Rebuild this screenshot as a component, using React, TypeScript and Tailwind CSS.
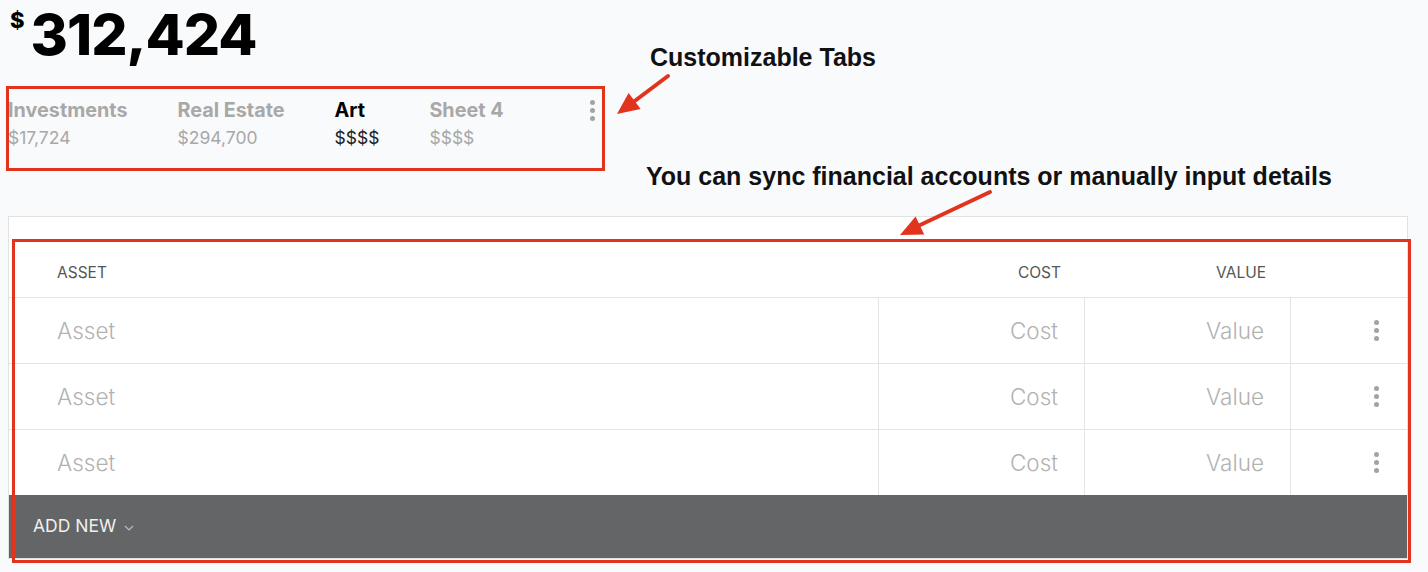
import React from "react";

const Kebab = ({ className = "" }: { className?: string }) => (
  <div className={`flex flex-col items-center gap-[3px] ${className}`}>
    <span className="block w-[5px] h-[5px] rounded-full bg-[#a3a3a3]" />
    <span className="block w-[5px] h-[5px] rounded-full bg-[#a3a3a3]" />
    <span className="block w-[5px] h-[5px] rounded-full bg-[#a3a3a3]" />
  </div>
);

const tabs = [
  { name: "Investments", value: "$17,724", active: false },
  { name: "Real Estate", value: "$294,700", active: false },
  { name: "Art", value: "$$$$", active: true },
  { name: "Sheet 4", value: "$$$$", active: false },
];

const cell = "text-[22.5px] font-light text-[#b2b2b2]";

const Row = ({ last = false }: { last?: boolean }) => (
  <div className={`flex ${last ? "h-[65px]" : "h-[66px] border-b border-[#e4e4e4]"}`}>
    <div className={`w-[869px] flex items-center pl-[48px] ${cell}`}>Asset</div>
    <div className={`w-[206px] flex items-center justify-end pr-[26px] border-l border-[#e4e4e4] ${cell}`}>Cost</div>
    <div className={`w-[206px] flex items-center justify-end pr-[26px] border-l border-[#e4e4e4] ${cell}`}>Value</div>
    <div className="flex-1 flex items-center justify-end pr-[28px] border-l border-[#e4e4e4]">
      <Kebab />
    </div>
  </div>
);

export default function App() {
  return (
    <div className="relative w-[1428px] h-[572px] overflow-hidden bg-[#f9fafc] font-['Inter',sans-serif]">
      {/* Total */}
      <div className="flex items-start pl-[10px] pt-[6px] text-black">
        <span className="text-[22px] font-extrabold leading-none mt-[3px]">$</span>
        <span className="text-[57px] font-extrabold leading-none tracking-[-1px] ml-[6px]">312,424</span>
      </div>

      {/* Tabs */}
      <div className="flex items-start w-[596px] ml-[8px] mt-[36px]">
        {tabs.map((t) => (
          <div key={t.name} className="flex flex-col mr-[50px]">
            <span className={`text-[19.8px] font-bold leading-[22px] ${t.active ? "text-black" : "text-[#a8a8a8]"}`}>{t.name}</span>
            <span className={`text-[17.5px] leading-[22px] mt-[6px] ${t.active ? "text-[#222]" : "text-[#a8a8a8]"}`}>{t.value}</span>
          </div>
        ))}
        <Kebab className="ml-auto mr-[9px] mt-[1px]" />
      </div>

      {/* Card */}
      <div className="absolute left-[8px] top-[216px] w-[1400px] bg-white border border-[#e2e2e2]">
        <div className="h-[24px]" />
        <div className="flex h-[57px] pt-[7px] border-b border-[#e4e4e4] text-[15.5px] text-[#555]">
          <div className="w-[869px] flex items-center pl-[48px]">ASSET</div>
          <div className="w-[206px] flex items-center justify-end pr-[23px]">COST</div>
          <div className="w-[206px] flex items-center justify-end pr-[24px]">VALUE</div>
          <div className="flex-1" />
        </div>
        <Row />
        <Row />
        <Row last />
        <div className="h-[63px] bg-[#646567] flex items-center pl-[24px] text-[17.5px] text-[#f0f0f0] gap-[8px]">
          <span>ADD NEW</span>
          <svg width="10" height="6" viewBox="0 0 10 6" className="mt-[3px]">
            <path d="M1 1l4 4 4-4" fill="none" stroke="#bdbdbd" strokeWidth="1.2" />
          </svg>
        </div>
      </div>

      {/* Annotation boxes */}
      <div className="absolute left-[6px] top-[86px] w-[599px] h-[85px] border-[3px] border-[#e2341d] pointer-events-none" />
      <div className="absolute left-[12px] top-[239px] w-[1399px] h-[324px] border-[3px] border-[#e2341d] pointer-events-none" />

      {/* Annotation texts */}
      <div className="absolute left-[650px] top-[42px] text-[25px] font-bold text-[#111] font-['Liberation_Sans',Arial,sans-serif] leading-[30px]">
        Customizable Tabs
      </div>
      <div className="absolute left-[646px] top-[161px] text-[25px] font-bold text-[#111] font-['Liberation_Sans',Arial,sans-serif] leading-[30px]">
        You can sync financial accounts or manually input details
      </div>

      {/* Arrows */}
      <svg className="absolute left-0 top-0 pointer-events-none" width="1428" height="572">
        <line x1="668" y1="76" x2="632" y2="103" stroke="#e2341d" strokeWidth="4" strokeLinecap="round" />
        <polygon points="617,114 640.6,108.9 628.6,92.9" fill="#e2341d" />
        <line x1="990" y1="192" x2="918" y2="226" stroke="#e2341d" strokeWidth="4" strokeLinecap="round" />
        <polygon points="900,235 924.2,234.5 915.6,216.5" fill="#e2341d" />
      </svg>
    </div>
  );
}
